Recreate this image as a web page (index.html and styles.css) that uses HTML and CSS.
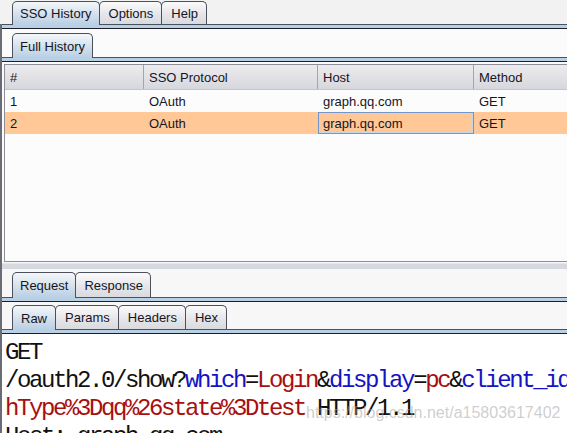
FILE: index.html
```html
<!DOCTYPE html>
<html>
<head>
<meta charset="utf-8">
<link rel="stylesheet" href="styles.css">
</head>
<body>
<div class="app">
  <div class="tabs tabs-top">
    <div class="tab sel">SSO History</div>
    <div class="tab">Options</div>
    <div class="tab">Help</div>
  </div>
  <div class="main">
    <div class="band"></div>
    <div class="upper">
      <div class="tabs tabs-sub">
        <div class="tab sel">Full History</div>
      </div>
      <div class="band"></div>
      <div class="table">
        <div class="row head">
          <div class="cell">#</div>
          <div class="cell">SSO Protocol</div>
          <div class="cell">Host</div>
          <div class="cell">Method</div>
        </div>
        <div class="row">
          <div class="cell">1</div>
          <div class="cell">OAuth</div>
          <div class="cell">graph.qq.com</div>
          <div class="cell">GET</div>
        </div>
        <div class="row hl">
          <div class="cell">2</div>
          <div class="cell">OAuth</div>
          <div class="cell focus">graph.qq.com</div>
          <div class="cell">GET</div>
        </div>
      </div>
    </div>
    <div class="splitter"></div>
    <div class="tabs tabs-req">
      <div class="tab sel">Request</div>
      <div class="tab">Response</div>
    </div>
    <div class="band"></div>
    <div class="tabs tabs-raw">
      <div class="tab sel">Raw</div>
      <div class="tab">Params</div>
      <div class="tab">Headers</div>
      <div class="tab">Hex</div>
    </div>
    <div class="band"></div>
    <div class="editor">
      <div class="line">GET</div>
      <div class="line">/oauth2.0/show?<span class="k">which</span>=<span class="v">Login</span>&amp;<span class="k">display</span>=<span class="v">pc</span>&amp;<span class="k">client_id</span></div>
      <div class="line"><span class="v">hType%3Dqq%26state%3Dtest</span> HTTP/1.1</div>
      <div class="line">Host: graph.qq.com</div>
      <div class="watermark">https://blog.csdn.net/a15803617402</div>
    </div>
  </div>
</div>
</body>
</html>
```

FILE: styles.css
```css
html, body {
  margin: 0;
  padding: 0;
  overflow: hidden;
  background: #f7f7f8;
}

.app {
  width: 640px;
  height: 433px;
  font-family: "Liberation Sans", Arial, sans-serif;
  font-size: 13px;
  color: #15151f;
  background: #f7f7f8;
  overflow: hidden;
}

.tabs {
  display: flex;
  align-items: flex-end;
  padding-left: 10px;
}

.tabs-top {
  height: 24px;
  padding-left: 12px;
  background: #f2f2f3;
}

.tab {
  position: relative;
  height: 23px;
  display: flex;
  align-items: center;
  padding: 0 8px 0 9px;
  box-sizing: border-box;
  border: 1px solid #4d4f5a;
  border-bottom: none;
  border-radius: 5px 5px 0 0;
  background: linear-gradient(#fbfbfc, #e6e6ea 55%, #d9dadf);
  margin-right: -1px;
  white-space: nowrap;
}

.tab.sel {
  z-index: 1;
  margin-bottom: -1px;
  height: 24px;
  padding: 0 7px;
  background: linear-gradient(#f4f7fa, #d3e0ec 55%, #b9cfe4);
}

.tabs-raw .tab.sel { padding: 0 8px; }

.tabs-sub .tab, .tabs-raw .tab { height: 24px; }
.tabs-sub .tab.sel, .tabs-raw .tab.sel { height: 25px; }
.tabs-req .tab { height: 25px; padding: 0 7px 0 8px; }
.tabs-req .tab.sel { height: 26px; padding: 0 7px; }

.main {
  border-left: 2px solid #6a6b74;
}

.band {
  height: 3px;
  border-top: 1px solid #4a5260;
  border-bottom: 1px solid #1c1f2a;
  background: #b9cfe4;
}

.upper {
  background: #fbfbfb;
  padding-top: 4px;
}

.tabs-sub {
  padding-left: 10px;
}

.table {
  margin: 2px 0 0 2px;
  height: 198px;
  box-sizing: border-box;
  border: 1px solid #8d8e98;
  background: #fcfcfc;
}

.row {
  display: grid;
  grid-template-columns: 139px 174px 156px 1fr;
  height: 22px;
}

.row.head {
  height: 24px;
  background: linear-gradient(#ececef, #e2e2e6 50%, #d6d7dc);
  border-bottom: 1px solid #c4c5cc;
}

.row.head .cell {
  border-right: 1px solid #a3a4ad;
}

.cell {
  display: flex;
  align-items: center;
  padding-left: 5px;
  box-sizing: border-box;
  white-space: nowrap;
}

.row.hl {
  background: #ffc896;
}

.cell.focus {
  box-shadow: inset 0 0 0 1px #7096cc, inset 0 0 0 2px #c6d6ea;
}

.splitter {
  margin-top: 1px;
  height: 6px;
  background: #d6d9df;
  border-top: 1px solid #e4e6ea;
  box-sizing: border-box;
}

.tabs-req {
  padding-top: 3px;
}

.tabs-raw {
  padding-top: 3px;
}

.editor {
  position: relative;
  background: #ffffff;
  height: 120px;
  padding: 5px 0 0 3px;
  font-family: "Liberation Mono", "Courier New", monospace;
  font-size: 24px;
  letter-spacing: -2.4px;
  line-height: 28px;
  color: #111111;
}

.line {
  height: 28px;
  white-space: pre;
}

.k { color: #1414c4; }
.v { color: #a8100f; }

.watermark {
  position: absolute;
  left: 304px;
  top: 70px;
  font-family: "Liberation Sans", Arial, sans-serif;
  font-size: 16px;
  letter-spacing: 0;
  line-height: 18px;
  color: rgba(165, 165, 165, 0.55);
  white-space: nowrap;
}
```
